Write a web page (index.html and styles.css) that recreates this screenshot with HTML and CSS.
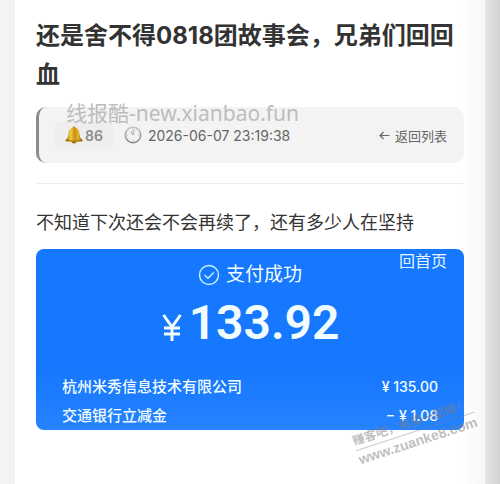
FILE: index.html
```html
<!DOCTYPE html>
<html lang="zh-CN">
<head>
<meta charset="utf-8">
<meta name="viewport" content="width=device-width, initial-scale=1">
<title>还是舍不得0818团故事会，兄弟们回回血</title>
<link rel="stylesheet" href="styles.css">
</head>
<body>
<main class="page">
  <h1 class="title">还是舍不得0818团故事会，兄弟们回回血</h1>
  <div class="meta">
    <span class="site-mark">线报酷-new.xianbao.fun</span>
    <span class="badge">
      <svg class="bell" viewBox="0 0 18 18" aria-hidden="true">
        <defs><linearGradient id="gold" x1="0" x2="1"><stop offset="0" stop-color="#8f6008"/><stop offset=".3" stop-color="#f2cc3c"/><stop offset=".55" stop-color="#c98f12"/><stop offset=".75" stop-color="#e4b62c"/><stop offset="1" stop-color="#754a05"/></linearGradient></defs>
        <circle cx="9" cy="2" r="1.4" fill="#b98a20"/>
        <ellipse cx="9" cy="15.5" rx="2.5" ry="2" fill="#8a5c12"/>
        <path d="M9 1.500C5 1.500 3.800 4.600 3.500 8 3.200 11 2.600 12.200.6 14c-.5.7.1 1.400 1.200 1.500 4.700 1 9.700 1 14.400 0 1.100-.1 1.700-.8 1.200-1.500C15.400 12.200 14.800 11 14.500 8 14.200 4.600 13 1.500 9 1.500Z" fill="url(#gold)"/>
        <path d="M1.200 14c4 1.500 11.600 1.500 15.600 0" fill="none" stroke="#8f640f" stroke-width=".8"/>
      </svg>86</span>
    <span class="time">
      <svg class="clock" viewBox="0 0 18 18" aria-hidden="true">
        <defs><linearGradient id="rim" x1="0" x2="0" y1="0" y2="1"><stop offset="0" stop-color="#c4c4c4"/><stop offset="1" stop-color="#858585"/></linearGradient></defs>
        <circle cx="9" cy="9" r="7.700" fill="#f1f1ef" stroke="url(#rim)" stroke-width="1.600"/>
        <path d="M9 2.800v1M9 14.200v1M2.800 9h1M14.200 9h1" stroke="#aaa" stroke-width=".8"/>
        <path d="M9 9L6.800 5M9 9l1.200-5.500" fill="none" stroke="#999" stroke-width=".8"/>
      </svg>
      <time datetime="2026-06-07T23:19:38">2026-06-07 23:19:38</time>
    </span>
    <a class="back" href="#"><svg class="arrow" viewBox="0 0 11 11" aria-hidden="true"><path d="M10.500 5.500H1M4.500 2L1 5.500 4.500 9"/></svg>返回列表</a>
  </div>
  <article class="content">
    <p class="text">不知道下次还会不会再续了，还有多少人在坚持</p>
    <section class="pay">
      <a class="home" href="#">回首页</a>
      <div class="status">
        <svg class="check" viewBox="0 0 22 22" aria-hidden="true"><circle cx="11" cy="11" r="9.500"/><path d="M6.500 11l3.500 3.300 5.800-5.800"/></svg>支付成功</div>
      <div class="amount"><svg class="yen" viewBox="0 0 22 27" aria-hidden="true"><path d="M2.500 1L11 13 19.500 1M11 12v15M3 14h16M3 20h16"/></svg>133.92</div>
      <dl class="lines">
        <div class="line"><dt>杭州米秀信息技术有限公司</dt><dd>¥ 135.00</dd></div>
        <div class="line"><dt>交通银行立减金</dt><dd>− ¥ 1.08</dd></div>
      </dl>
      <div class="stamp"><span class="slogan">赚客吧，有奖一起赚！</span><span class="domain">www.zuanke8.com</span></div>
    </section>
  </article>
</main>
</body>
</html>
```
FILE: styles.css
```css
* { box-sizing: border-box; }

body {
  margin: 0;
  padding: 0 15px;
  min-height: 100vh;
  display: flex;
  background: linear-gradient(to left, #d2d2d2, #e6e6e6 15px, #f3f3f3 15px);
  color: #333;
  font-family: Inter, "Noto Sans CJK SC", sans-serif;
}

.page {
  flex: 1;
  min-width: 0;
  padding: 16px 21px;
  background: linear-gradient(to left, #f8f8f8, #fff 24px);
}

.title {
  margin: 0 0 13px;
  font-size: 24px;
  line-height: 39px;
  font-weight: 700;
}

.meta {
  position: relative;
  display: flex;
  align-items: center;
  height: 56px;
  padding: 0 17px 0 16px;
  border-left: 3px solid #8c8c8c;
  border-radius: 10px;
  background: #f3f3f3;
  font-size: 13px;
  color: #666;
}

.site-mark {
  position: absolute;
  left: 27px;
  top: -9px;
  z-index: 1;
  font: 21px/30px "Noto Sans", "Noto Sans CJK SC", sans-serif;
  color: #bdbdbd;
  white-space: nowrap;
}

.badge {
  display: flex;
  align-items: center;
  height: 27px;
  padding: 0 10px;
  border-radius: 4px;
  background: #eee;
  color: #8c8c8c;
  font-size: 14px;
  font-weight: 600;
}

.bell, .clock { width: 18px; height: 18px; }
.bell { margin-right: 2px; }

.time {
  display: flex;
  align-items: center;
  gap: 6px;
  margin-left: 11px;
  font-size: 14px;
}

.back {
  display: flex;
  align-items: center;
  gap: 5px;
  margin-left: auto;
  color: #666;
  text-decoration: none;
}

.arrow {
  width: 11px;
  height: 11px;
  fill: none;
  stroke: #666;
  stroke-width: 1.2;
}

.content {
  margin-top: 20px;
  padding-top: 24px;
  border-top: 1px solid #eee;
}

.text {
  margin: 0 0 11px;
  font-size: 18px;
  line-height: 30px;
}

.pay {
  position: relative;
  padding: 10px 26px 0;
  border-radius: 8px;
  background: linear-gradient(#1677ff 65%, #2583ff);
  color: #f2fdff;
}

.home {
  position: absolute;
  right: 17px;
  top: 0;
  font-size: 16px;
  line-height: 24px;
  color: #e4f5ff;
  text-decoration: none;
}

.status {
  display: flex;
  justify-content: center;
  align-items: center;
  gap: 6px;
  font-size: 19px;
  line-height: 32px;
}

.check {
  width: 22px;
  height: 22px;
  fill: none;
  stroke: #c8f2ff;
  stroke-width: 1.4;
}

.amount {
  display: flex;
  justify-content: center;
  align-items: center;
  gap: 6px;
  font: 600 48px/64px Roboto, sans-serif;
}

.yen {
  width: 22px;
  height: 27px;
  margin-top: 8px;
  fill: none;
  stroke: #f2fdff;
  stroke-width: 3;
}

.lines {
  margin: 0;
  padding-top: 17px;
  font-size: 15px;
  line-height: 29px;
  font-weight: 500;
}

.line {
  display: flex;
  justify-content: space-between;
}

.line dd {
  margin: 0;
  font-size: 14px;
}

.stamp {
  position: absolute;
  right: -13px;
  bottom: -20px;
  display: grid;
  color: rgba(125, 125, 125, .5);
  font-size: 12px;
  line-height: 18px;
  font-weight: 700;
  white-space: nowrap;
  transform: rotate(-18deg);
}

.slogan { border-bottom: 1px solid rgba(125, 125, 125, .4); }
.domain { font: 700 14px/18px "Liberation Sans", sans-serif; }
```
